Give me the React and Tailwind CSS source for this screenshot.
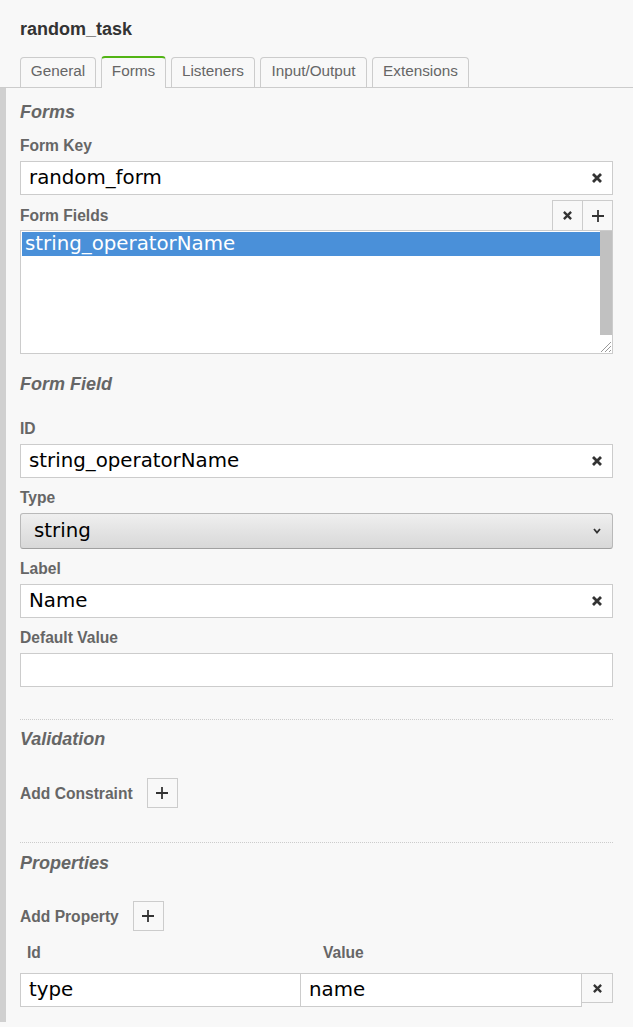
import React from "react";

const XIcon = ({ size = 10, sw = 2.8 }) => (
  <svg width={size} height={size} viewBox="0 0 10 10" className="block">
    <path d="M1 1 L9 9 M9 1 L1 9" stroke="#333" strokeWidth={sw} strokeLinecap="butt" />
  </svg>
);

const PlusIcon = () => (
  <svg width="12" height="12" viewBox="0 0 12 12" className="block">
    <path d="M6 0 V12 M0 6 H12" stroke="#333" strokeWidth="1.8" />
  </svg>
);

const Label = ({ children, className = "" }) => (
  <div className={"h-5 text-[15.6px] leading-5 font-bold text-[#666] " + className}>{children}</div>
);

const Heading = ({ children, className = "" }) => (
  <div className={"h-6 text-[18px] leading-6 font-bold italic text-[#666] " + className}>{children}</div>
);

const TextInput = ({ value, clear = true, className = "" }) => (
  <div
    className={
      "flex h-[34px] items-center border border-[#ccc] bg-white pl-[8px] pr-[10px] " + className
    }
  >
    <span className="flex-1 font-['DejaVu_Sans',sans-serif] text-[19.8px] leading-none text-black">{value}</span>
    {clear && <XIcon />}
  </div>
);

const Tab = ({ label, active, w }) => (
  <div
    className={
      "flex items-center justify-center rounded-t-[4px] border border-b-0 text-[15.3px] text-[#666] " +
      w +
      " " +
      (active
        ? "relative -mb-px h-[32px] border-[#ccc] border-t-2 border-t-[#52b415] bg-[#f8f8f8] pb-[4px]"
        : "h-[30px] border-[#ccc] pb-[3px]")
    }
  >
    {label}
  </div>
);

const SquareBtn = ({ children, className = "" }) => (
  <div className={"flex h-[30px] w-[31px] items-center justify-center border border-[#ccc] " + className}>
    {children}
  </div>
);

export default function App() {
  return (
    <div className="min-h-[1027px] bg-[#f8f8f8] font-['Liberation_Sans',Arial,sans-serif]">
      <div className="pl-5 pt-[17px] text-[18px] leading-6 font-bold text-[#333]">random_task</div>
      <div className="mt-4 flex h-[31px] items-end gap-[5px] border-b border-[#ccc] pl-5">
        <Tab label="General" w="w-[76px]" />
        <Tab label="Forms" w="w-[65px]" active />
        <Tab label="Listeners" w="w-[84px]" />
        <Tab label="Input/Output" w="w-[107px]" />
        <Tab label="Extensions" w="w-[97px]" />
      </div>
      <div className="flex">
        <div className="w-[6px] shrink-0 bg-[#d0d0d0]" />
        <div className="flex-1 pb-[15px] pl-[14px] pr-5">
          <Heading className="mt-3">Forms</Heading>
          <Label className="mt-3">Form Key</Label>
          <TextInput value="random_form" className="mt-[5px]" />
          <div className="mt-[5px] flex h-[30px] items-center">
            <Label className="flex-1 pt-[1px]">Form Fields</Label>
            <SquareBtn className="-mr-px border-b-0">
              <XIcon size={9} sw={2.6} />
            </SquareBtn>
            <SquareBtn className="border-b-0">
              <PlusIcon />
            </SquareBtn>
          </div>
          <div className="relative h-[124px] border border-[#ccc] bg-white">
            <div className="absolute right-0 top-0 h-[104px] w-[12px] bg-[#c1c1c1]" />
            <div className="ml-px mr-[12px] mt-[1px] flex h-[24px] items-center bg-[#4a90d9] pl-[3px] font-['DejaVu_Sans',sans-serif] text-[19.8px] leading-none text-white">
              string_operatorName
            </div>
            <svg className="absolute bottom-0 right-0" width="14" height="14" viewBox="0 0 14 14">
              <path d="M13 3 L3 13 M13 7 L7 13 M13 11 L11 13" stroke="#999" strokeWidth="1" />
            </svg>
          </div>
          <Heading className="mt-[18px]">Form Field</Heading>
          <Label className="mt-[23px]">ID</Label>
          <TextInput value="string_operatorName" className="mt-[5px]" />
          <Label className="mt-[10px]">Type</Label>
          <div className="mt-[5px] flex h-[36px] items-center rounded-[3px] border border-[#b9b9b9] border-b-[#a0a0a0] bg-gradient-to-b from-[#efefef] to-[#d8d8d8] pl-[13px] pr-[11px]">
            <span className="flex-1 font-['DejaVu_Sans',sans-serif] text-[19.8px] leading-none text-black">string</span>
            <svg width="8" height="6" viewBox="0 0 8 6" className="block">
              <path d="M1 1 L4 4.5 L7 1" stroke="#333" strokeWidth="1.8" fill="none" />
            </svg>
          </div>
          <Label className="mt-[10px]">Label</Label>
          <TextInput value="Name" className="mt-[5px]" />
          <Label className="mt-[10px]">Default Value</Label>
          <TextInput value="" clear={false} className="mt-[5px]" />
          <div className="mt-[32px] border-t border-dotted border-[#ccc]" />
          <Heading className="mt-[7px]">Validation</Heading>
          <div className="mt-[27px] flex h-[30px] items-center">
            <Label className="pt-[1px]">Add Constraint</Label>
            <SquareBtn className="ml-[14px]">
              <PlusIcon />
            </SquareBtn>
          </div>
          <div className="mt-[34px] border-t border-dotted border-[#ccc]" />
          <Heading className="mt-[8px]">Properties</Heading>
          <div className="mt-[26px] flex h-[30px] items-center">
            <Label className="pt-[1px]">Add Property</Label>
            <SquareBtn className="ml-[14px]">
              <PlusIcon />
            </SquareBtn>
          </div>
          <div className="mt-[12px] flex">
            <Label className="w-[280px] pl-[7px]">Id</Label>
            <Label className="pl-[23px]">Value</Label>
          </div>
          <div className="mt-[10px] flex items-start">
            <TextInput value="type" clear={false} className="w-[281px]" />
            <TextInput value="name" clear={false} className="-ml-px w-[282px]" />
            <div className="-ml-px flex h-[30px] w-[32px] items-center justify-center border border-[#ccc]">
              <XIcon size={9} sw={2.6} />
            </div>
          </div>
        </div>
      </div>
    </div>
  );
}
